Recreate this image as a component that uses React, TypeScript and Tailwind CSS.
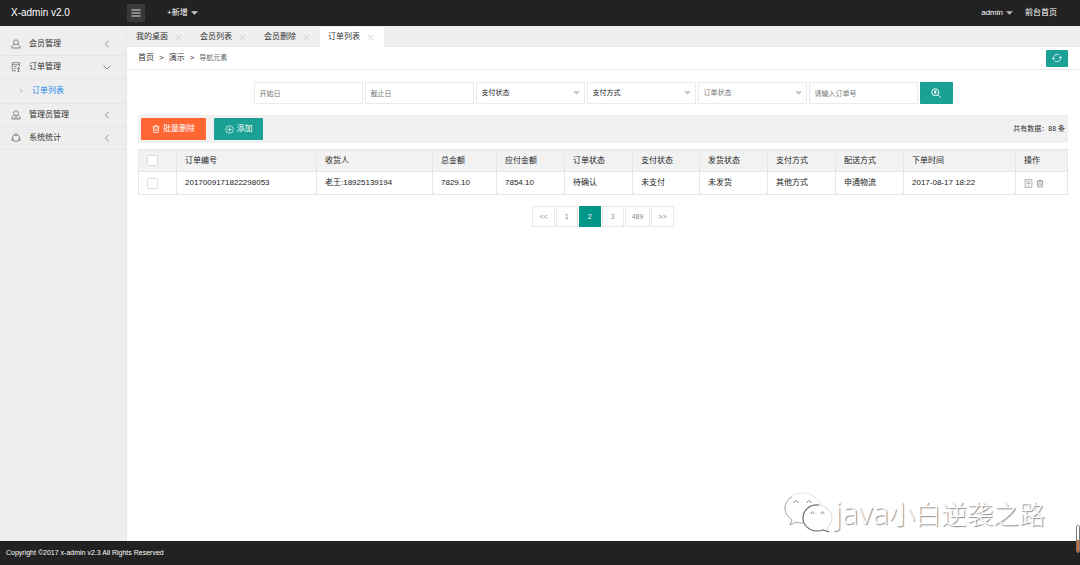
import React, { useState } from 'react';

const menu = [
  { name: '会员管理', icon: 'user' },
  { name: '订单管理', icon: 'order', children: ['订单列表'] },
  { name: '管理员管理', icon: 'admin' },
  { name: '系统统计', icon: 'stats' },
];

const tabs = ['我的桌面', '会员列表', '会员删除', '订单列表'];

const columns = [
  { title: '订单编号', width: 'w-[140px]' },
  { title: '收货人', width: 'w-[116px]' },
  { title: '总金额', width: 'w-[64px]' },
  { title: '应付金额', width: 'w-[68px]' },
  { title: '订单状态', width: 'w-[68px]' },
  { title: '支付状态', width: 'w-[67px]' },
  { title: '发货状态', width: 'w-[68px]' },
  { title: '支付方式', width: 'w-[68px]' },
  { title: '配送方式', width: 'w-[68px]' },
  { title: '下单时间', width: 'w-[112px]' },
  { title: '操作', width: '' },
];

const orders = [
  ['2017009171822298053', '老王:18925139194', '7829.10', '7854.10', '待确认', '未支付', '未发货', '其他方式', '申通物流', '2017-08-17 18:22'],
];

const pages = ['<<', '1', '2', '3', '489', '>>'];

const iconPaths: Record<string, React.ReactNode> = {
  user: (
    <>
      <circle cx="10" cy="6.5" r="4.8" />
      <path d="M7 10.5C3.5 11.500 2 14 1.500 18h17c-.5-4-2-6.500-5.500-7.500" />
    </>
  ),
  order: (
    <>
      <path d="M17 9V1.500H2.500v16H10M2.500 5.500H17M6 9.500h5M6 13h3" />
      <path d="M15 18.500V11m-3 3 3-3 3 3M12.500 18.500h5" />
    </>
  ),
  admin: (
    <>
      <circle cx="10" cy="6.5" r="4.8" />
      <path d="M7 10.500C3.500 11.500 2 14 1.500 18h17c-.5-4-2-6.500-5.500-7.500M6 18l4-5 4 5" />
    </>
  ),
  stats: (
    <>
      <circle cx="10" cy="10" r="7" />
      <circle cx="10" cy="3" r="1.700" fill="#eee" />
      <circle cx="3" cy="13.500" r="1.700" fill="#eee" />
      <circle cx="17" cy="13.500" r="1.700" fill="#eee" />
    </>
  ),
  left: <path d="M14 2 6 10l8 8" />,
  right: <path d="m7 3 7 7-7 7" />,
  down: <path d="m1 6 9 9 9-9" />,
  close: <path d="m3 3 14 14M17 3 3 17" />,
  list: <path d="M1 4h18M1 10h18M1 16h18" />,
  refresh: (
    <>
      <path d="M3 12.500A7.500 7.500 0 0 1 14.500 4M17 7.500A7.500 7.500 0 0 1 5.500 16" />
      <path d="m.5 10 2.500 3 3-2.500M19.500 10 17 7l-3 2.500" />
    </>
  ),
  search: (
    <>
      <circle cx="8.500" cy="8.500" r="7" />
      <path d="M13.500 13.500 19 19M6 6.500h5M6 10h5M8.500 5v7" />
    </>
  ),
  trash: <path d="M1.500 4.500h17M7 4V1.500h6V4M3.500 4.500l1 14h11l1-14M8 8.500v6M12 8.500v6" />,
  plus: (
    <>
      <circle cx="10" cy="10" r="8.500" />
      <path d="M10 5v10M5 10h10" />
    </>
  ),
  form: <path d="M2.500 1.500h15v17h-15zM6 6h8M6 10h8M8 14h4" />,
};

interface IconProps {
  name: string;
  className?: string;
  stroke?: number;
}

const Icon: React.FC<IconProps> = ({ name, className = '', stroke = 1.5 }) => (
  <svg viewBox="0 0 20 20" fill="none" stroke="currentColor" strokeWidth={stroke} className={`shrink-0 ${className}`} aria-hidden="true">
    {iconPaths[name]}
  </svg>
);

const Caret: React.FC<{ className?: string }> = ({ className = '' }) => (
  <svg viewBox="0 0 8 4" fill="currentColor" className={`w-[7px] h-1 shrink-0 ${className}`} aria-hidden="true">
    <path d="M0 0h8L4 4z" />
  </svg>
);

const SearchSelect: React.FC<{ label: string; options: string[]; muted?: boolean }> = ({ label, options, muted }) => (
  <div className="relative">
    <select
      aria-label={label}
      className={`block w-[109px] h-[22px] px-[5px] appearance-none bg-white border border-[#ebebeb] text-[7px] outline-none ${muted ? 'text-[#757575]' : 'text-[#222]'}`}
    >
      <option>{label}</option>
      {options.map((o) => (
        <option key={o}>{o}</option>
      ))}
    </select>
    <Caret className="absolute right-[5px] top-[9px] text-[#c2c2c2] pointer-events-none" />
  </div>
);

const App: React.FC = () => {
  const [activeTab, setActiveTab] = useState('订单列表');
  const [page, setPage] = useState('2');
  const [checked, setChecked] = useState(false);

  const inputClass = 'block w-[109px] h-[22px] px-[5px] bg-white border border-[#ebebeb] text-[7px] placeholder:text-[#757575] outline-none';
  const checkClass = 'block w-[11px] h-[11px] appearance-none bg-white border border-[#dedede] rounded-[1px] checked:bg-[#009688]';

  return (
    <div className="min-h-screen flex flex-col bg-white text-[8px] leading-3 text-[#333] font-['Liberation_Sans','Noto_Sans_CJK_SC',sans-serif]">
      <header className="h-[26px] flex items-center bg-[#222] text-white">
        <a href="#" className="w-[127px] pl-[11px] text-[10px]">X-admin v2.0</a>
        <button aria-label="菜单" className="w-[18px] h-[18px] flex items-center justify-center bg-[#3a3a3a] text-[#ddd]">
          <Icon name="list" className="w-[10px] h-[10px]" stroke={2} />
        </button>
        <button className="ml-[22px] flex items-center gap-[3px]">
          +新增 <Caret className="text-[#ccc]" />
        </button>
        <div className="ml-auto mr-[23px] flex items-center gap-3">
          <button className="flex items-center gap-[3px]">
            admin <Caret className="text-[#bbb]" />
          </button>
          <a href="#">前台首页</a>
        </div>
      </header>

      <div className="flex-1 flex">
        <nav className="w-[127px] shrink-0 pt-[7px] bg-[#eee] border-r border-[#e6e6e6]">
          <ul>
            {menu.map((item) => (
              <li key={item.name} className="border-b border-[#e5e5e5]">
                <a href="#" className="h-[22px] pl-[11px] pr-[15px] flex items-center">
                  <Icon name={item.icon} className="w-[10px] h-[10px] text-[#666]" />
                  <span className="ml-2 flex-1">{item.name}</span>
                  <Icon name={item.children ? 'down' : 'left'} className="w-[8px] h-[8px] text-[#777]" stroke={2} />
                </a>
                {item.children?.map((child) => (
                  <a key={child} href="#" className="h-[25px] pl-[18px] border-t border-[#e5e5e5] flex items-center text-[#1e88e5]">
                    <Icon name="right" className="w-[6px] h-[6px] text-[#999]" stroke={2} />
                    <span className="ml-2">{child}</span>
                  </a>
                ))}
              </li>
            ))}
          </ul>
        </nav>

        <main className="relative flex-1 min-w-0">
          <div className="h-[21px] pl-px pt-px flex bg-[#efeef0] border-b border-[#e8e8e8]">
            {tabs.map((tab) => (
              <div key={tab} className={`w-16 -mb-px pl-2 pr-[10px] flex items-center justify-between ${activeTab === tab ? 'bg-white' : ''}`}>
                <button onClick={() => setActiveTab(tab)}>{tab}</button>
                <button aria-label={`关闭${tab}`} className="text-[#c2c2c2]">
                  <Icon name="close" className="w-[7px] h-[7px]" stroke={2} />
                </button>
              </div>
            ))}
          </div>

          <div className="h-[23px] pl-[11px] pr-3 flex items-center justify-between border-b border-[#eee]">
            <div className="flex items-center gap-[5px]">
              <a href="#">首页</a>
              <span>&gt;</span>
              <a href="#">演示</a>
              <span>&gt;</span>
              <cite className="not-italic text-[7px] text-[#666]">导航元素</cite>
            </div>
            <button aria-label="刷新" className="w-[22px] h-[17px] flex items-center justify-center rounded-[1px] bg-[#1aa094] text-white">
              <Icon name="refresh" className="w-[10px] h-[10px]" />
            </button>
          </div>

          <div className="pl-[11px] pr-3 pt-3">
            <form className="flex justify-center gap-[2px]" onSubmit={(e) => e.preventDefault()}>
              <input className={inputClass} placeholder="开始日" aria-label="开始日" />
              <input className={inputClass} placeholder="截止日" aria-label="截止日" />
              <SearchSelect label="支付状态" options={['已支付', '未支付']} />
              <SearchSelect label="支付方式" options={['支付宝', '微信', '货到付款']} />
              <SearchSelect label="订单状态" options={['待确认', '已确认', '已收货', '已取消']} muted />
              <input className={inputClass} placeholder="请输入订单号" aria-label="请输入订单号" />
              <button aria-label="搜索" className="w-[33px] h-[22px] flex items-center justify-center rounded-[1px] bg-[#1aa094] text-white">
                <Icon name="search" className="w-[10px] h-[10px]" stroke={2} />
              </button>
            </form>

            <div className="h-7 mt-[11px] px-[3px] flex items-center gap-2 bg-[#f1f1f1]">
              <button className="w-[65px] h-[22px] flex items-center justify-center gap-[3px] rounded-[1px] bg-[#ff6633] text-white">
                <Icon name="trash" className="w-2 h-2" stroke={2} />批量删除
              </button>
              <button className="w-[49px] h-[22px] flex items-center justify-center gap-[3px] rounded-[1px] bg-[#1aa094] text-white">
                <Icon name="plus" className="w-[9px] h-[9px]" />添加
              </button>
              <span className="ml-auto text-[7px]">共有数据：88 条</span>
            </div>

            <table className="w-full mt-[6px] table-fixed border-collapse text-left text-[#222]">
              <thead>
                <tr className="h-[22px] bg-[#f2f2f2]">
                  <th className="w-[38px] pl-2 border border-[#e6e6e6]">
                    <input type="checkbox" aria-label="全选" className={checkClass} checked={checked} onChange={() => setChecked(!checked)} />
                  </th>
                  {columns.map((c) => (
                    <th key={c.title} className={`${c.width} pl-2 font-normal border border-[#e6e6e6]`}>{c.title}</th>
                  ))}
                </tr>
              </thead>
              <tbody>
                {orders.map((row) => (
                  <tr key={row[0]} className="h-[23px]">
                    <td className="pl-2 border border-[#e6e6e6]">
                      <input type="checkbox" aria-label={row[0]} className={checkClass} checked={checked} onChange={() => setChecked(!checked)} />
                    </td>
                    {row.map((cell, i) => (
                      <td key={i} className="pl-2 border border-[#e6e6e6]">{cell}</td>
                    ))}
                    <td className="pl-2 border border-[#e6e6e6]">
                      <div className="flex gap-[3px] text-[#888]">
                        <button aria-label="查看"><Icon name="form" className="w-[9px] h-[9px]" /></button>
                        <button aria-label="删除"><Icon name="trash" className="w-2 h-[9px]" stroke={2} /></button>
                      </div>
                    </td>
                  </tr>
                ))}
              </tbody>
            </table>

            <div className="mt-[11px] flex justify-center gap-px">
              {pages.map((p) => (
                <button
                  key={p}
                  onClick={() => setPage(p)}
                  className={`min-w-[22px] h-[21px] px-[6px] border text-[7px] ${page === p ? 'bg-[#009688] border-[#009688] text-white' : 'bg-white border-[#e8e8e8] text-[#888]'}`}
                >
                  {p}
                </button>
              ))}
            </div>
          </div>

          <div className="absolute right-[35px] bottom-[7px] flex items-center gap-[2px] pointer-events-none">
            <svg viewBox="0 0 50 42" className="w-[50px] h-[42px]" fill="white" stroke="#999" strokeWidth="0.8" aria-hidden="true">
              <path d="M20 1C9 1 2 8 2 16c0 5 3 9 7 12l-2 5 6-3c3 1 6 1 9 1 9 0 16-7 16-15S30 1 20 1z" stroke="#ddd" />
              <path d="M9 5C4 8 2 12 2 16c0 5 3 9 7 12l-2 5 6-3c3 1 5 1 7 1" fill="none" />
              <path d="M34 13c-8 0-14 6-14 13s6 13 14 13c2 0 4 0 6-1l6 2-2-4c3-2 5-6 5-10 0-7-7-13-15-13z" stroke="#ccc" />
              <path d="M36 13c-10-1-16 6-16 13s6 13 14 13c2 0 4 0 6-1l6 2" fill="none" stroke="#777" strokeWidth="1.2" />
              <path d="M11 11c0-3 4-3 4 0M24 11c0-3 4-3 4 0M28 22c0-3 3-3 3 0M38 22c0-3 3-3 3 0" fill="none" stroke="#777" />
            </svg>
            <span className="text-[26px] leading-[42px] font-light text-white font-['Noto_Sans_CJK_SC',sans-serif] [text-shadow:1px_1px_1px_#888]">
              <span className="text-[31px] font-['Open_Sans',sans-serif]">java</span>小白逆袭之路
            </span>
          </div>
        </main>
      </div>

      <footer className="h-6 pl-[6px] flex items-center bg-[#222] text-white text-[7px]">
        Copyright ©2017 x-admin v2.3 All Rights Reserved
      </footer>

      <div className="fixed right-0 bottom-3 w-1 h-7 flex flex-col border border-[#777] rounded-[2px] overflow-hidden">
        <div className="flex-1 bg-white"></div>
        <div className="h-3 bg-[#c8693a]"></div>
      </div>
    </div>
  );
};

export default App;
